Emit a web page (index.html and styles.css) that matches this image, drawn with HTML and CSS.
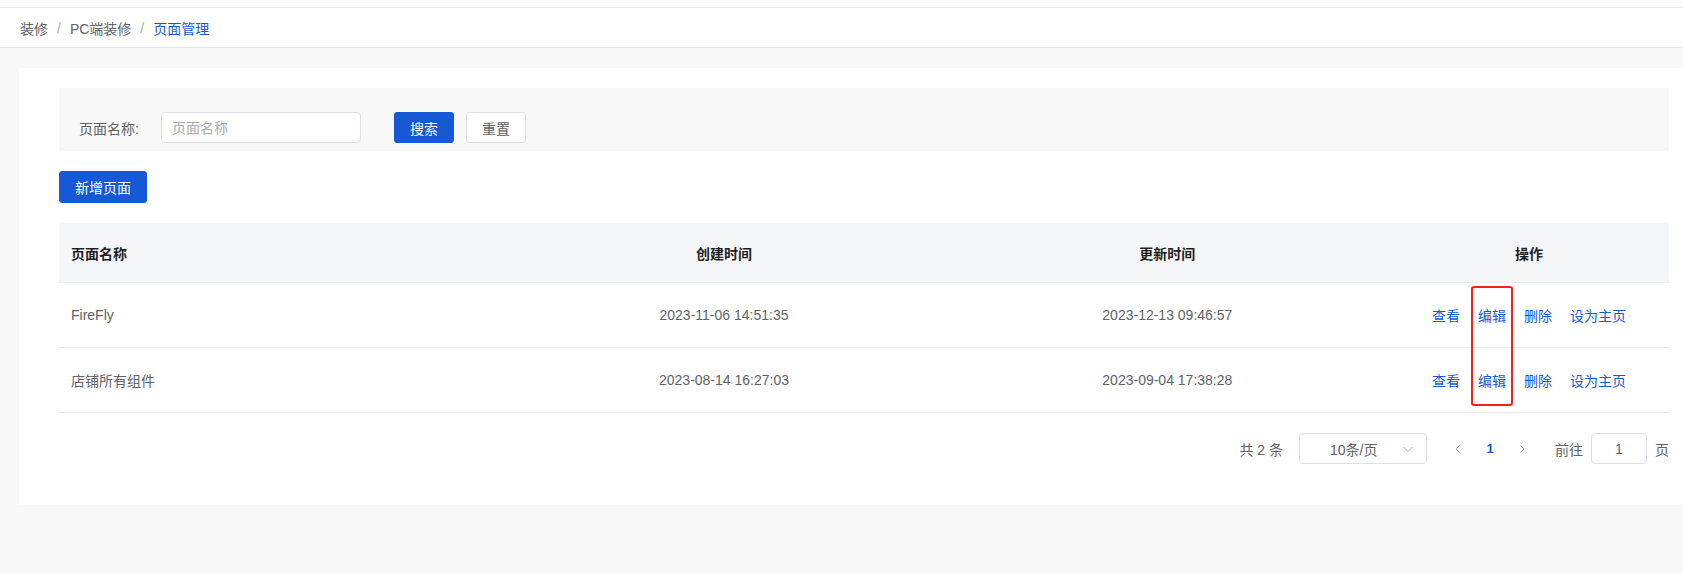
FILE: index.html
```html
<!DOCTYPE html>
<html lang="zh-CN">
<head>
  <meta charset="UTF-8">
  <meta name="viewport" content="width=device-width, initial-scale=1.0">
  <title>页面管理</title>
  <link rel="stylesheet" href="styles.css">
</head>
<body>
  <div class="topbar"></div>
  <nav class="crumbs">
    <span class="crumb">装修</span>
    <span class="sep">/</span>
    <span class="crumb">PC端装修</span>
    <span class="sep">/</span>
    <span class="crumb current">页面管理</span>
  </nav>

  <main class="main">
    <section class="card">
      <form class="filter">
        <label class="filter-label">页面名称:</label>
        <input class="filter-input" type="text" placeholder="页面名称">
        <button type="button" class="btn btn-primary btn-search">搜索</button>
        <button type="button" class="btn btn-plain">重置</button>
      </form>

      <div class="toolbar">
        <button type="button" class="btn btn-primary btn-add">新增页面</button>
      </div>

      <div class="table-wrap">
        <table class="pages">
          <thead>
            <tr>
              <th class="col-name">页面名称</th>
              <th>创建时间</th>
              <th>更新时间</th>
              <th class="col-ops">操作</th>
            </tr>
          </thead>
          <tbody>
            <tr>
              <td class="col-name">FireFly</td>
              <td>2023-11-06 14:51:35</td>
              <td>2023-12-13 09:46:57</td>
              <td class="col-ops">
                <a class="op">查看</a><a class="op">编辑</a><a class="op">删除</a><a class="op">设为主页</a>
              </td>
            </tr>
            <tr>
              <td class="col-name">店铺所有组件</td>
              <td>2023-08-14 16:27:03</td>
              <td>2023-09-04 17:38:28</td>
              <td class="col-ops">
                <a class="op">查看</a><a class="op">编辑</a><a class="op">删除</a><a class="op">设为主页</a>
              </td>
            </tr>
          </tbody>
        </table>
        <div class="mark"></div>
      </div>

      <div class="pager">
        <span class="total">共 2 条</span>
        <div class="size-select">
          <span>10条/页</span>
          <svg class="caret" width="12" height="12" viewBox="0 0 12 12"><path d="M1.5 4 L6 8.5 L10.5 4" fill="none" stroke="#a8abb2" stroke-width="1"/></svg>
        </div>
        <button type="button" class="page-btn">
          <svg width="10" height="10" viewBox="0 0 10 10"><path d="M6.5 1.5 L3 5 L6.5 8.5" fill="none" stroke="#a8abb2" stroke-width="1"/></svg>
        </button>
        <button type="button" class="page-btn active">1</button>
        <button type="button" class="page-btn">
          <svg width="10" height="10" viewBox="0 0 10 10"><path d="M3.5 1.5 L7 5 L3.5 8.5" fill="none" stroke="#a8abb2" stroke-width="1"/></svg>
        </button>
        <span class="goto">前往</span>
        <input class="goto-input" type="text" value="1">
        <span class="goto-unit">页</span>
      </div>
    </section>
  </main>
</body>
</html>
```

FILE: styles.css
```css
:root {
  --primary: #1559d6;
  --text: #606266;
  --border: #dcdfe6;
  --line: #ebeef5;
}

body {
  margin: 0;
  background: #f8f8f8;
  color: var(--text);
  font-family: "Liberation Sans", "Noto Sans CJK SC", sans-serif;
  font-size: 14px;
}

.topbar {
  height: 7px;
  background: #fff;
  border-bottom: 1px solid #e8e8e8;
}

.crumbs {
  height: 39px;
  background: #fff;
  border-bottom: 1px solid #e4e4ea;
  display: flex;
  align-items: center;
  padding-left: 20px;
}

.crumb {
  color: var(--text);
}
.crumb.current {
  color: var(--primary);
}
.sep {
  color: #a8abb2;
  margin: 0 9px;
}

.main {
  padding: 20px 0 0 19px;
}

.card {
  background: #fff;
  padding: 20px 14px 41px 40px;
}

/* search bar */
.filter {
  background: #f8f8f8;
  display: flex;
  align-items: center;
  padding: 24px 20px 8px;
  margin: 0;
}

.filter-label {
  color: var(--text);
  margin-right: 22px;
}

.filter-input {
  box-sizing: border-box;
  width: 200px;
  height: 31px;
  border: 1px solid var(--border);
  border-radius: 4px;
  padding: 0 10px;
  font: inherit;
  color: var(--text);
  outline: none;
  margin-right: 33px;
}
.filter-input::placeholder {
  color: #a8abb2;
}

.btn {
  box-sizing: border-box;
  height: 31px;
  padding: 0 15px;
  border-radius: 3px;
  font: inherit;
  cursor: pointer;
}
.btn-primary {
  background: var(--primary);
  border: 1px solid var(--primary);
  color: #fff;
}
.btn-plain {
  background: #fff;
  border: 1px solid var(--border);
  color: var(--text);
}
.btn-search,
.btn-plain {
  width: 60px;
  padding: 0;
}
.btn-search {
  margin-right: 12px;
}

.toolbar {
  margin-top: 20px;
}
.btn-add {
  width: 88px;
  height: 32px;
  padding: 0;
}

/* table */
.table-wrap {
  position: relative;
  margin-top: 20px;
}

.pages {
  width: 100%;
  border-collapse: collapse;
  table-layout: fixed;
}

.pages th {
  height: 59px;
  background: #f5f6f8;
  color: #1f1f1f;
  font-weight: bold;
  text-align: center;
  border-bottom: 1px solid var(--line);
  padding: 0 12px;
}

.pages td {
  height: 64px;
  text-align: center;
  border-bottom: 1px solid var(--line);
  padding: 0 12px;
  color: var(--text);
}

.pages .col-name {
  text-align: left;
}
.pages th.col-ops {
  width: 256px;
}

.op {
  color: var(--primary);
  cursor: pointer;
}
.op + .op {
  margin-left: 18px;
}

.mark {
  position: absolute;
  left: 1412px;
  top: 63px;
  width: 38px;
  height: 116px;
  border: 2px solid #f5221b;
  border-radius: 3px;
}

/* pagination */
.pager {
  display: flex;
  justify-content: flex-end;
  align-items: center;
  margin-top: 20px;
}

.total {
  margin-right: 16px;
}

.size-select {
  box-sizing: border-box;
  width: 128px;
  height: 31px;
  border: 1px solid var(--border);
  border-radius: 4px;
  display: flex;
  align-items: center;
  justify-content: space-between;
  padding: 0 12px 0 30px;
  margin-right: 16px;
}

.page-btn {
  width: 30px;
  height: 28px;
  border: none;
  background: none;
  padding: 0;
  display: flex;
  align-items: center;
  justify-content: center;
  font: inherit;
  font-size: 13px;
  font-weight: bold;
  color: var(--text);
}
.page-btn + .page-btn {
  margin-left: 2px;
}
.page-btn.active {
  color: var(--primary);
}

.goto {
  margin-left: 18px;
  margin-right: 8px;
}

.goto-input {
  box-sizing: border-box;
  width: 56px;
  height: 31px;
  border: 1px solid var(--border);
  border-radius: 4px;
  text-align: center;
  font: inherit;
  color: var(--text);
  outline: none;
  margin-right: 8px;
}
```
